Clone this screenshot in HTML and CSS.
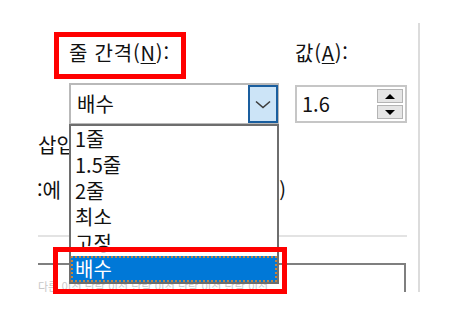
FILE: index.html
```html
<!DOCTYPE html>
<html lang="ko">
<head>
  <meta charset="UTF-8" />
  <title>단락 - 줄 간격</title>
  <link rel="stylesheet" href="styles.css">
</head>
<body>
  <div class="stage">
    <div class="shot">
      <div class="spacing">
        <label class="lbl">줄 간격(<u>N</u>):</label>
        <label class="lbl">값(<u>A</u>):</label>

        <div class="combo">
          <span class="combo-text">배수</span>
          <span class="combo-btn">
            <svg width="16" height="9" viewBox="0 0 16 9">
              <polyline points="1,1.5 8,7.5 15,1.5" fill="none" stroke="#3c3c3c" stroke-width="1.6"/>
            </svg>
          </span>
          <!-- opened dropdown -->
          <ul class="drop">
            <li>1줄</li>
            <li>1.5줄</li>
            <li>2줄</li>
            <li>최소</li>
            <li>고정</li>
            <li class="sel">배수</li>
          </ul>
        </div>

        <div class="spin">
          <span class="spin-text">1.6</span>
          <span class="spin-btns">
            <span class="spin-btn"><i class="tri-up"></i></span>
            <span class="spin-btn"><i class="tri-down"></i></span>
          </span>
        </div>
      </div>

      <div class="opt">삽입</div>
      <div class="opt opt-2"><span>:에</span><span>)</span></div>

      <div class="sep"></div>

      <div class="preview">
        <p>다른 이전 단락 이전 단락 이전 단락 이전 단락 이전</p>
      </div>
    </div>

    <!-- red annotation boxes -->
    <div class="mark mark-label"></div>
    <div class="mark mark-item"></div>
  </div>
</body>
</html>
```

FILE: styles.css
```css
* {
  margin: 0;
  padding: 0;
  box-sizing: border-box;
}

body {
  background: #fff;
  font-family: "Noto Sans CJK KR", "Noto Sans", sans-serif;
  color: #111;
}

.stage {
  position: relative;
  width: 459px;
  height: 317px;
  padding: 23px 0 0 38px;
}

/* cropped part of the dialog */
.shot {
  width: 382px;
  height: 269px;
  overflow: hidden;
  border-right: 2px solid #dcdcdc;
}

.spacing {
  display: grid;
  grid-template-columns: 210px 112px;
  column-gap: 16px;
  row-gap: 17px;
  padding: 17px 0 0 31px;
  align-items: start;
}

.lbl {
  font-size: 20px;
  line-height: 26px;
  letter-spacing: 0.8px;
  white-space: nowrap;
}

.lbl u {
  text-decoration-thickness: 1px;
  text-underline-offset: 2px;
}

.combo {
  position: relative;
  z-index: 2;
  height: 42px;
  border: 2px solid #b9b9b9;
  display: flex;
  align-items: stretch;
  justify-content: space-between;
  background: #fff;
}

.combo-text {
  font-size: 20px;
  line-height: 38px;
  padding-left: 6px;
}

.combo-btn {
  width: 30px;
  margin: 0 -1px 0 0;
  border: 2px solid #1a5e9e;
  background: #cce4f7;
  display: flex;
  align-items: center;
  justify-content: center;
}

.drop {
  position: absolute;
  top: 39px;
  left: -2px;
  width: 210px;
  list-style: none;
  background: #fff;
  border: 2px solid #6e6e6e;
}

.drop li {
  height: 26px;
  font-size: 20px;
  line-height: 26px;
  padding-left: 4px;
}

.drop li.sel {
  background: #0078d7;
  color: #fff;
  outline: 2px dotted #c4853f;
  outline-offset: -2px;
}

.spin {
  margin-top: 2px;
  height: 38px;
  border: 2px solid #c6c6c6;
  display: flex;
  justify-content: space-between;
  align-items: stretch;
}

.spin-text {
  font-size: 20px;
  line-height: 34px;
  padding-left: 5px;
}

.spin-btns {
  display: flex;
  flex-direction: column;
  gap: 2px;
  padding: 2px 2px 2px 0;
}

.spin-btn {
  width: 26px;
  flex: 1;
  background: #e5e5e5;
  border: 1px solid #b4b4b4;
  display: flex;
  align-items: center;
  justify-content: center;
}

.tri-up,
.tri-down {
  width: 0;
  height: 0;
  border-left: 5px solid transparent;
  border-right: 5px solid transparent;
}

.tri-up {
  border-bottom: 5px solid #000;
}

.tri-down {
  border-top: 5px solid #000;
}

.opt {
  font-size: 20px;
  line-height: 26px;
  height: 26px;
  margin-top: 7px;
  white-space: nowrap;
}

.opt-2 {
  width: 249px;
  margin: 19px 0 0 -1px;
  display: flex;
  justify-content: space-between;
}

.sep {
  width: 369px;
  height: 2px;
  margin-top: 32px;
  background: #e3e3e3;
}

.preview {
  width: 368px;
  height: 60px;
  margin-top: 26px;
  border: 2px solid #7f7f7f;
  border-left: none;
  overflow: hidden;
}

.preview p {
  padding-top: 14px;
  font-size: 11px;
  line-height: 14px;
  color: #c8c8c8;
  white-space: nowrap;
}

.mark {
  position: absolute;
  border: 5px solid #ff0000;
  z-index: 5;
}

.mark-label {
  left: 54px;
  top: 32px;
  width: 132px;
  height: 47px;
}

.mark-item {
  left: 53px;
  top: 247px;
  width: 234px;
  height: 47px;
}
```
